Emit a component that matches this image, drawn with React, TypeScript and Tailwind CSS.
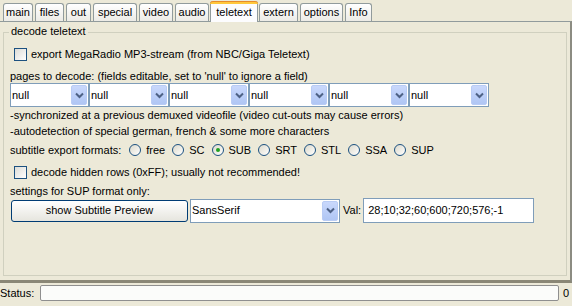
import React from "react";

const tabs: { label: string; w: number; sel?: boolean }[] = [
  { label: "main", w: 30 },
  { label: "files", w: 29 },
  { label: "out", w: 25 },
  { label: "special", w: 44 },
  { label: "video", w: 34 },
  { label: "audio", w: 34 },
  { label: "teletext", w: 48, sel: true },
  { label: "extern", w: 39 },
  { label: "options", w: 43 },
  { label: "Info", w: 27 },
];

function Arrow() {
  return (
    <div className="w-[16px] self-stretch my-[1px] mr-[1px] rounded-[2px] bg-gradient-to-b from-[#C9D8FC] to-[#B0C6F4] border border-[#B9CCF5] flex items-center justify-center">
      <svg width="9" height="7" viewBox="0 0 9 7">
        <path d="M1 1.5 L4.5 5 L8 1.5" stroke="#4D6185" strokeWidth="2" fill="none" />
      </svg>
    </div>
  );
}

function Combo({ text, w }: { text: string; w: number }) {
  return (
    <div
      className="h-[24px] border border-[#7F9DB9] bg-white flex items-stretch"
      style={{ width: w }}
    >
      <div className="flex-1 flex items-center pl-[1px]">{text}</div>
      <Arrow />
    </div>
  );
}

function Check() {
  return (
    <div className="w-[13px] h-[13px] border border-[#1C5180] bg-gradient-to-br from-[#DCDCD7] to-white" />
  );
}

function Radio({ label, sel }: { label: string; sel?: boolean }) {
  return (
    <div className="flex items-center gap-[5px]">
      <div className="w-[12px] h-[12px] rounded-full border border-[#1C5180] bg-gradient-to-br from-[#DCD9CB] to-white flex items-center justify-center">
        {sel && <div className="w-[4px] h-[4px] rounded-full bg-[#21A121]" />}
      </div>
      <span>{label}</span>
    </div>
  );
}

export default function App() {
  return (
    <div
      className="w-[572px] h-[306px] bg-[#ECE9D8] text-black text-[11px] leading-none flex flex-col overflow-hidden"
      style={{ fontFamily: "'Liberation Sans', Arial, sans-serif" }}
    >
      {/* tab strip */}
      <div className="h-[21px] flex items-end pl-[3px] gap-[2px]">
        {tabs.map((t) =>
          t.sel ? (
            <div
              key={t.label}
              className="h-[21px] -mx-[1px] -mb-[1px] relative z-10 bg-[#FCFCFE] border-x border-[#919B9C] rounded-t-[3px] flex flex-col"
              style={{ width: t.w }}
            >
              <div className="h-[3px] bg-[#FFC83C] border-t border-[#E68B2C] rounded-t-[3px] -mx-[1px]" />
              <div className="flex-1 flex items-center justify-center pb-[1px]">{t.label}</div>
            </div>
          ) : (
            <div
              key={t.label}
              className="h-[18px] bg-gradient-to-b from-white to-[#ECEBE6] border border-b-0 border-[#919B9C] rounded-t-[3px] flex items-center justify-center"
              style={{ width: t.w }}
            >
              {t.label}
            </div>
          )
        )}
      </div>

      {/* panel */}
      <div className="h-[262px] border-t border-[#919B9C] border-r-2 border-r-[#8C8C82] border-b-[3px] border-b-[#8A8776] pl-[3px] pr-[3px] pt-[4px] pb-[4px] bg-[#ECE9D8]">
        <div className="relative border border-[#D0D0BF] mt-[6px] h-[244px]">
          <div className="absolute left-[5px] -top-[7px] px-[2px] bg-[#ECE9D8]">decode teletext</div>
          <div className="pl-[6px] pt-[12px] flex flex-col">
            <div className="h-[19px] flex items-center gap-[4px] pl-[4px]">
              <Check />
              <span>export MegaRadio MP3-stream (from NBC/Giga Teletext)</span>
            </div>
            <div className="h-[19px] pt-[5px] flex items-center">
              pages to decode: (fields editable, set to 'null' to ignore a field)
            </div>
            <div className="flex">
              <Combo text="null" w={79} />
              <Combo text="null" w={80} />
              <Combo text="null" w={80} />
              <Combo text="null" w={80} />
              <Combo text="null" w={80} />
              <Combo text="null" w={80} />
            </div>
            <div className="h-[17px] flex items-center">
              -synchronized at a previous demuxed videofile (video cut-outs may cause errors)
            </div>
            <div className="h-[15px] flex items-center">
              -autodetection of special german, french &amp; some more characters
            </div>
            <div className="h-[22px] flex items-center">
              <span className="mr-[8px]">subtitle export formats:</span>
              <div className="flex items-center gap-[7px]">
                <Radio label="free" />
                <Radio label="SC" />
                <Radio label="SUB" sel />
                <Radio label="SRT" />
                <Radio label="STL" />
                <Radio label="SSA" />
                <Radio label="SUP" />
              </div>
            </div>
            <div className="h-[23px] flex items-center gap-[4px] pl-[4px]">
              <Check />
              <span>decode hidden rows (0xFF); usually not recommended!</span>
            </div>
            <div className="h-[14px] flex items-center">settings for SUP format only:</div>
            <div className="flex items-center">
              <div className="w-[177px] h-[22px] ml-[1px] rounded-[3px] border border-[#003C74] bg-gradient-to-b from-white to-[#E6E5DE] flex items-center justify-center">
                show Subtitle Preview
              </div>
              <div className="ml-[2px]">
                <Combo text="SansSerif" w={150} />
              </div>
              <span className="ml-[3px] mr-[2px]">Val:</span>
              <div className="w-[171px] h-[25px] border border-[#7F9DB9] bg-white flex items-center pl-[4px]">
                28;10;32;60;600;720;576;-1
              </div>
            </div>
          </div>
        </div>
      </div>

      {/* status */}
      <div className="h-[18px] flex items-center mt-[1px]">
        <span className="w-[40px]">Status:</span>
        <div className="w-[519px] h-[16px] rounded-[2px] border border-[#8F8F8F] bg-[#FBFCFA]" />
        <span className="ml-[4px]">0</span>
      </div>
    </div>
  );
}
